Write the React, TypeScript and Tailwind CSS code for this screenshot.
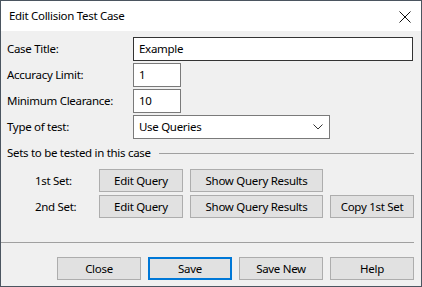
import React from "react";

const font = { fontFamily: '"Noto Sans", sans-serif' };

function Btn({ children, w = "w-[84px]", focused = false }: { children: React.ReactNode; w?: string; focused?: boolean }) {
  return (
    <div
      className={`${w} h-[23px] flex items-center justify-center bg-[#e1e1e1] text-[11.5px] tracking-[-0.3px] text-black ${
        focused ? "border-2 border-[#0078d7]" : "border border-[#adadad]"
      }`}
    >
      {children}
    </div>
  );
}

export default function App() {
  return (
    <div
      className="w-[422px] h-[287px] border border-[#4b5560] bg-[#f0f0f0] flex flex-col overflow-hidden text-black tracking-[-0.3px]"
      style={font}
    >
      {/* Title bar */}
      <div className="h-[30px] bg-white flex items-center justify-between pl-[8px] pr-[10px] shrink-0">
        <span className="text-[11.5px] leading-none">Edit Collision Test Case</span>
        <svg width="12" height="12" viewBox="0 0 12 12" className="mt-[1px]">
          <path d="M0.5 0.5 L11.5 11.5 M11.5 0.5 L0.5 11.5" stroke="#111" strokeWidth="1" />
        </svg>
      </div>

      {/* Body */}
      <div className="flex flex-col pl-[6px] pr-[7px] pt-[6px] text-[11.5px]">
        <div className="flex items-center h-[24px]">
          <div className="w-[126px]">Case Title:</div>
          <div className="w-[280px] h-[24px] border border-[#333] bg-white flex items-center pl-[5px]">Example</div>
        </div>
        <div className="flex items-center h-[24px] mt-[2px]">
          <div className="w-[126px]">Accuracy Limit:</div>
          <div className="w-[48px] h-[24px] border border-[#7a7a7a] bg-white flex items-center pl-[5px]">1</div>
        </div>
        <div className="flex items-center h-[24px] mt-[2px]">
          <div className="w-[126px]">Minimum Clearance:</div>
          <div className="w-[48px] h-[24px] border border-[#7a7a7a] bg-white flex items-center pl-[5px]">10</div>
        </div>
        <div className="flex items-center h-[24px] mt-[2px]">
          <div className="w-[126px]">Type of test:</div>
          <div className="w-[197px] h-[24px] border border-[#7a7a7a] bg-white flex items-center justify-between pl-[5px] pr-[6px]">
            <span>Use Queries</span>
            <svg width="10" height="6" viewBox="0 0 10 6">
              <path d="M0.5 0.5 L5 5 L9.5 0.5" stroke="#333" strokeWidth="1" fill="none" />
            </svg>
          </div>
        </div>

        {/* Group header */}
        <div className="flex items-center mt-[5px] h-[18px]">
          <span className="whitespace-nowrap">Sets to be tested in this case</span>
          <div className="flex-1 h-px bg-[#a0a0a0] ml-[8px]" />
        </div>

        <div className="flex items-center mt-[7px]">
          <div className="w-[28px]" />
          <div className="w-[64px]">1st Set:</div>
          <Btn>Edit Query</Btn>
          <div className="w-[7px]" />
          <Btn w="w-[133px]">Show Query Results</Btn>
        </div>
        <div className="flex items-center mt-[3px]">
          <div className="w-[28px]" />
          <div className="w-[64px]">2nd Set:</div>
          <Btn>Edit Query</Btn>
          <div className="w-[7px]" />
          <Btn w="w-[133px]">Show Query Results</Btn>
          <div className="w-[7px]" />
          <Btn>Copy 1st Set</Btn>
        </div>
      </div>

      <div className="mt-[24px] mr-[7px] h-px bg-[#a0a0a0]" />

      <div className="flex justify-end gap-[7px] pr-[7px] mt-[14px]">
        <Btn>Close</Btn>
        <Btn focused>Save</Btn>
        <Btn>Save New</Btn>
        <Btn>Help</Btn>
      </div>
    </div>
  );
}
